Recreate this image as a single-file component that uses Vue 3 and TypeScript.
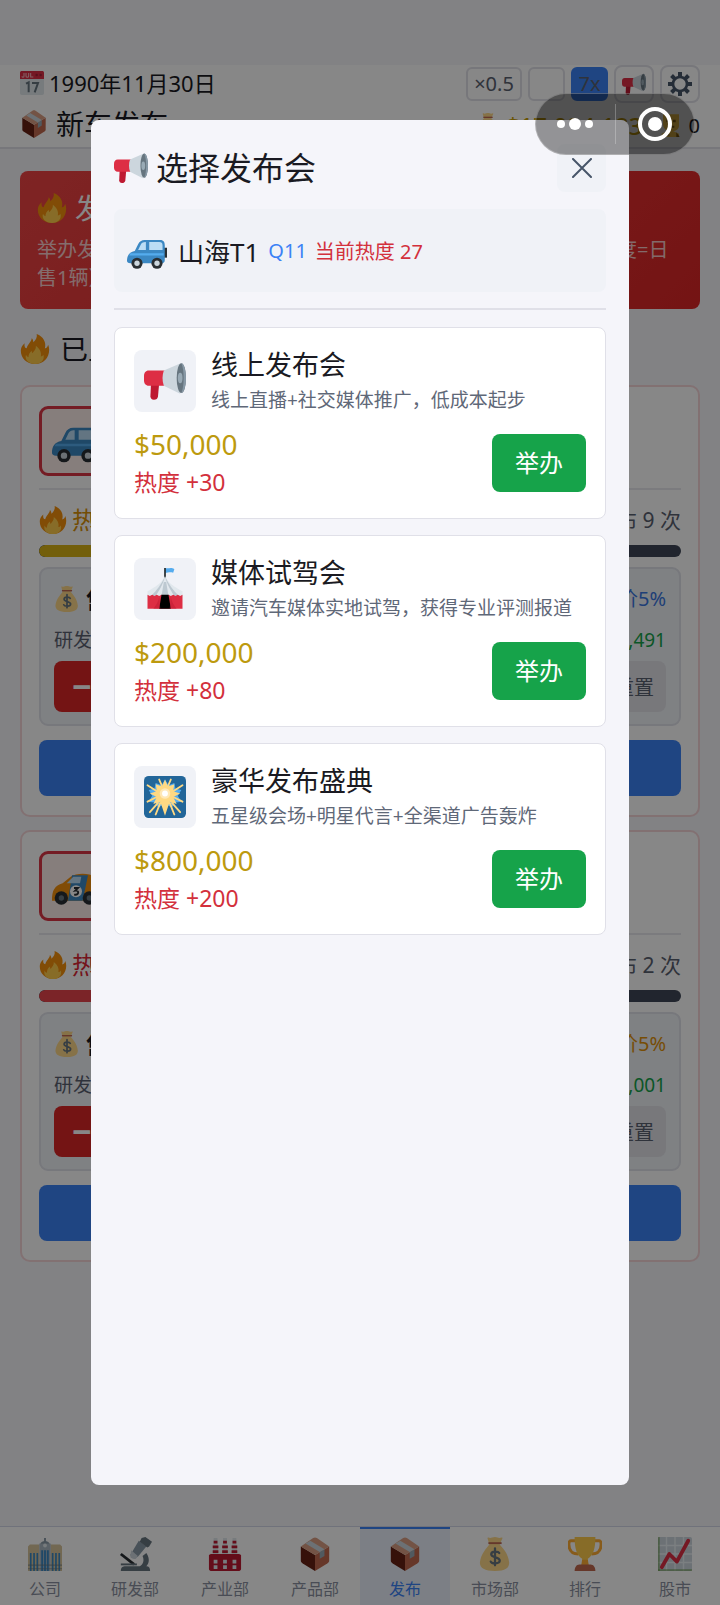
<script setup lang="ts">
import { ref } from 'vue'

interface LaunchEvent {
  icon: string
  name: string
  desc: string
  cost: number
  heat: number
}

interface CarCard {
  id: string
  icon: string
  tone: 'gold' | 'red'
  launches: number
  priceNote: string
  noteTone: 'blue' | 'amber'
  heat: number
  price: string
}

const events: LaunchEvent[] = [
  { icon: 'megaphone', name: '线上发布会', desc: '线上直播+社交媒体推广，低成本起步', cost: 50000, heat: 30 },
  { icon: 'tent', name: '媒体试驾会', desc: '邀请汽车媒体实地试驾，获得专业评测报道', cost: 200000, heat: 80 },
  { icon: 'sparkler', name: '豪华发布盛典', desc: '五星级会场+明星代言+全渠道广告轰炸', cost: 800000, heat: 200 },
]

const cars: CarCard[] = [
  { id: 'a', icon: 'suv', tone: 'gold', launches: 9, priceNote: '溢价5%', noteTone: 'blue', heat: 27, price: '$15,491' },
  { id: 'b', icon: 'racer', tone: 'red', launches: 2, priceNote: '降价5%', noteTone: 'amber', heat: 60, price: '$18,001' },
]

const tabs = [
  { icon: 'building', label: '公司' },
  { icon: 'microscope', label: '研发部' },
  { icon: 'factory', label: '产业部' },
  { icon: 'box', label: '产品部' },
  { icon: 'box', label: '发布' },
  { icon: 'bag', label: '市场部' },
  { icon: 'trophy', label: '排行' },
  { icon: 'chart', label: '股市' },
]

const activeTab = ref(4)
const modalOpen = ref(true)
const money = (n: number): string => '$' + n.toLocaleString('en-US')
</script>

<template>
  <svg class="sprite" aria-hidden="true">
    <symbol id="megaphone" viewBox="0 0 36 36">
      <path fill="#be1931" d="M6 20h7l-1 11c-.2 2-1.500 3-3.500 3S5.500 32.500 5.500 31z" />
      <path fill="#dd2e44" d="M4 9h15v13H4c-2.500 0-4-2-4-4.500v-4C0 11 1.500 9 4 9z" />
      <path fill="#ccd6dd" d="M17 9l14-6v26l-14-7c-1.500-4-1.500-9 0-13z" />
      <ellipse cx="32" cy="15.500" rx="4" ry="12.800" fill="#66757f" />
      <path fill="#8899a6" d="M32 2.700c2.200 0 4 5.700 4 12.800s-1.800 12.800-4 12.800c1.500-3 2-8 2-12.800s-.5-9.800-2-12.800z" />
      <ellipse cx="31" cy="15.500" rx="2" ry="4.500" fill="#99aab5" />
    </symbol>
    <symbol id="suv" viewBox="0 0 36 36">
      <path fill="#292f33" d="M33 15h3v9h-3z" />
      <path fill="#3b88c3" d="M0 27c0-5 2-8 7-9l3-6c1-2.500 3-4 6-4h14c3 0 4 2 4 5v13c0 2-1 3-3 3H3c-2 0-3-1-3-2z" />
      <path fill="#bbddf5" d="M10 17l2-4c1-2 2-3 5-3v7zM20 10h9c2 0 3 1 3 3v4H20z" />
      <path fill="#55acee" d="M3 20h30v2H2z" />
      <circle cx="9" cy="29" r="5" fill="#292f33" /><circle cx="27" cy="29" r="5" fill="#292f33" />
      <circle cx="9" cy="29" r="2.400" fill="#ccd6dd" /><circle cx="27" cy="29" r="2.400" fill="#ccd6dd" />
    </symbol>
    <symbol id="racer" viewBox="0 0 36 36">
      <path fill="#f4900c" d="M0 29c0-8 2-11 8-13l6-5c4-3 14-3 18 0h4v18z" />
      <path fill="#3b88c3" d="M15 10h12l-4 19H12z" />
      <path fill="#bbddf5" d="M11 16l5-5h6l-1 5z" />
      <circle cx="18" cy="22" r="4.500" fill="#fff" />
      <path fill="none" stroke="#292f33" stroke-width="1.400" d="M16.500 19.500h3l-2 2c3-.5 3 3.500-.9 3" />
      <circle cx="7" cy="27" r="5" fill="#292f33" /><circle cx="28" cy="27" r="5" fill="#292f33" />
      <circle cx="7" cy="27" r="2" fill="#66757f" /><circle cx="28" cy="27" r="2" fill="#66757f" />
    </symbol>
    <symbol id="fire" viewBox="0 0 36 36">
      <path fill="#f4900c" d="M35 19c0-2-.4-4-1.200-6-.8 3-2 4-4 4.500C32 10 28 3 20 0c1 4-1 7-4 10 0-2-.5-4-2-5 0 4-5 7-6 12C6 17 5 15 5.500 11 2 14 1 17 1 20c0 9 7 16 17 16s17-7 17-17z" />
      <path fill="#ffcc4d" d="M28 25c-.5 1-1.500 2-3 2 1-5-1-9-6-13 .5 4-2 6-4 9-.8-1-1-2-.8-3-3 2-4 5-4 8-1.500-.5-2.500-1.500-3-3-2 6 3 11 11 11 7 0 12-5 9.800-11z" />
    </symbol>
    <symbol id="box" viewBox="0 0 36 36">
      <path fill="#662113" d="M3 10l15 9v17L5 28c-1.500-1-2-1.500-2-3z" />
      <path fill="#c1694f" d="M33 10l-15 9v17l13-8c1.500-1 2-1.500 2-3z" />
      <path fill="#d99e82" d="M3 10L16 1c1.500-.8 2.500-.8 4 0l13 9-15 9z" />
      <path fill="#99aab5" d="M23 16l5-3v7l-5 3z" />
      <path fill="#ccd6dd" d="M8 7l5-3 15 9-5 3z" />
    </symbol>
    <symbol id="calendar" viewBox="0 0 36 36">
      <path fill="#e1e8ed" d="M0 8h36v25c0 2-1 3-3 3H3c-2 0-3-1-3-3z" />
      <path fill="#dd2e44" d="M0 3c0-2 1-3 3-3h30c2 0 3 1 3 3v9H0z" />
      <path fill="none" stroke="#f5b8c0" stroke-width="1.600" d="M6 3v5c0 2-3 2-3 0M9 3v5c0 2 4 2 4 0V3M16 3v6h4" />
      <circle cx="25" cy="6" r="1.800" fill="#a32035" /><circle cx="31" cy="6" r="1.800" fill="#a32035" />
      <path fill="none" stroke="#66757f" stroke-width="3" d="M9 19l4-2v15M18 18h9l-5 14" />
    </symbol>
    <symbol id="bag" viewBox="0 0 36 36">
      <path fill="#fdd888" d="M23 8c3 4 9 9 10 19 0 6-4 9-15 9S2 33 2 27c1-9 7-15 10-19L10 1c1-1 2 0 3 0s3-1 5-1 3 1 5 1 2-1 3 0z" />
      <path fill="#bf6952" d="M11 5.500h14v2H11z" />
      <path fill="none" stroke="#67757f" stroke-width="2.400" stroke-linecap="round" d="M22.500 17c-1-2-8.500-2.500-8.500 1.300 0 4 9 2.500 9 6.700 0 4-8.500 3.500-9.500 1M18 12v18" />
    </symbol>
    <symbol id="tent" viewBox="0 0 36 36">
      <path fill="#55acee" d="M18 0c3 1 5-1 8 1l-1 3c-3-1-4 0-7 0z" />
      <path stroke="#292f33" stroke-width="1.500" d="M18 0v9" />
      <path fill="#e1e8ed" d="M18 7c3 6 8 9 15 13v5H3v-5c7-4 12-7 15-13z" />
      <path fill="#99aab5" d="M18 7c-2 8-5 12-8 17H6c5-5 9-10 12-17zM18 7c2 8 5 12 8 17h4c-5-5-9-10-12-17zM17 12l-2 12h6l-2-12z" opacity=".5" />
      <path fill="#dd2e44" d="M3 23l2 1 2-1 2 1 2-1 2 1 2-1 3 1 3-1 2 1 2-1 2 1 2-1 2 1 2-1v12H3z" />
      <path fill="#000" d="M15 23h6l2 12H13z" />
      <path fill="#be1931" d="M8 35c2-3 4-5 5-10l1 10zM28 35c-2-3-4-5-5-10l-1 10z" opacity=".5" />
    </symbol>
    <symbol id="sparkler" viewBox="0 0 36 36">
      <rect width="36" height="36" rx="4" fill="#226699" />
      <path fill="#55acee" d="M18 3l3 5 5-2 1 5 5 1-3 5 3 5-6 1-2 4-6-3-6 3-2-4-6-1 3-5-3-5 5-1 1-5 5 2z" />
      <path stroke="#ffd983" stroke-width="1.600" stroke-linecap="round" d="M13 3l3 7M23 3l-3 7M3 8l8 5M33 8l-8 5M3 22l8-4M33 22l-8-4M5 31l7-8M31 31l-7-8M10 33l4-10M26 33l-4-10" />
      <path fill="#ffd983" d="M18 3l2.500 6L26 7l-1 6 6 2-6 3 3 6-6-2-4 12-4-12-6 2 3-6-6-3 6-2-1-6 5.500 2z" />
      <circle cx="18" cy="15" r="4.500" fill="#ffe8b6" /><circle cx="18" cy="15" r="2.500" fill="#fff" />
    </symbol>
    <symbol id="building" viewBox="0 0 36 36">
      <path fill="#8899a6" d="M13 8c0-5 10-5 10 0zM17 1h2v5h-2z" />
      <path fill="#d8c49c" d="M0 10l2-2h10v28H0zM24 8h10l2 2v26H24z" />
      <path fill="#aab8c2" d="M12 7h12v29H12z" />
      <path fill="#3b88c3" d="M2 17h1.800v19H2zM5.500 17h1.800v19H5.500zM9 17h1.800v19H9zM14 14h2v22h-2zM17 14h2v22h-2zM20 14h2v22h-2zM25.200 17H27v19h-1.800zM28.700 17h1.800v19h-1.800zM32.200 17H34v19h-1.800z" />
      <path fill="#66757f" d="M0 29h36v1.500H0zM0 33h36v1.200H0z" opacity=".6" /><circle cx="18" cy="9" r="2" fill="#e1e8ed" />
    </symbol>
    <symbol id="microscope" viewBox="0 0 36 36">
      <path fill="#66757f" d="M3 36c0-4 2-5 5-5h15c4-2 5-7 3-11l4-3c4 6 3 11 0 14 3 0 4 2 4 5z" />
      <path fill="#8899a6" d="M22 4l8 6-9 11c-2 2-7 0-8-2z" />
      <path fill="#ccd6dd" d="M14 14l7 6-2 3c-3 1-6-1-6-3z" />
      <path fill="#66757f" d="M25 1l4-1 7 5-3 5-2 1-8-6z" />
      <path stroke="#292f33" stroke-width="3" d="M3 18l14 11" /><path stroke="#66757f" stroke-width="2" d="M3 29h17" />
    </symbol>
    <symbol id="factory" viewBox="0 0 36 36">
      <path fill="#e1e8ed" d="M6 1h4l1 18H5zM16 1h4l1 18h-6zM26 1h4l1 18h-6z" />
      <path fill="#be1931" d="M6 4h4v3H6zM5 9h6v3H5zM5 14h6v3H5zM16 4h4v3h-4zM15 9h6v3h-6zM15 14h6v3h-6zM26 4h4v3h-4zM25 9h6v3h-6zM25 14h6v3h-6zM1 19l2-1h30l2 1v15c0 1-1 2-2 2H3c-1 0-2-1-2-2z" />
      <path fill="#e1e8ed" d="M6 24h4v4H6zM16 24h4v4h-4zM26 24h4v4h-4zM6 30h4v4H6zM16 30h4v4h-4zM26 30h4v4h-4z" />
    </symbol>
    <symbol id="trophy" viewBox="0 0 36 36">
      <path fill="none" stroke="#ffac33" stroke-width="3" d="M9 4H3c-2 0-2 2-2 4 0 6 3 10 10 10M27 4h6c2 0 2 2 2 4 0 6-3 10-10 10" />
      <path fill="#ffcc4d" d="M7 0h22c0 12-2 19-8 23v6h-6v-6C9 19 7 12 7 0z" />
      <path fill="#ffac33" d="M15 24h6l1 6h-8z" /><path fill="#c1694f" d="M12 29h12c3 0 5 3 5 7H7c0-4 2-7 5-7z" />
    </symbol>
    <symbol id="chart" viewBox="0 0 36 36">
      <rect width="36" height="36" rx="2" fill="#ccd6dd" />
      <path fill="none" stroke="#e9f0f3" stroke-width="1.500" d="M9 0v36M18 0v36M27 0v36M0 9h36M0 18h36M0 27h36" />
      <path stroke="#5c913b" stroke-width="1" d="M1 0v36M0 35h36" />
      <path fill="none" stroke="#dd2e44" stroke-width="4" stroke-linecap="round" stroke-linejoin="round" d="M4 32l8-14 8 8L32 4" />
    </symbol>
    <symbol id="gear" viewBox="0 0 36 36">
      <circle cx="18" cy="18" r="10.500" fill="none" stroke="#475569" stroke-width="4" />
      <path stroke="#475569" stroke-width="6" d="M18 0v7M18 29v7M0 18h7M29 18h7M5.300 5.300l5 5M25.700 25.700l5 5M5.300 30.700l5-5M25.700 10.300l5-5" />
    </symbol>
    <symbol id="staff" viewBox="0 0 36 36">
      <path fill="#ffcc4d" d="M6 2h24v17c0 5-5 8-9 8l9 4v5H4v-5l9-4c-4-2-7-5-7-10z" />
      <path fill="#8a6410" d="M11 10h4v4h-4zM21 10h4v4h-4zM13 19h10v3H13zM8 30l9 3-9 3zM26 29l5 7h-5z" />
    </symbol>
  </svg>

  <div class="page">
    <header class="top">
      <div class="bar">
        <span class="date"><svg class="i24"><use href="#calendar" /></svg>1990年11月30日</span>
        <span class="tools">
          <button class="speed wide">×0.5</button>
          <button class="speed" aria-label="暂停"></button>
          <button class="speed on">7x</button>
          <button class="tool" aria-label="公告"><svg class="i24"><use href="#megaphone" /></svg></button>
          <button class="tool" aria-label="设置"><svg class="i24"><use href="#gear" /></svg></button>
        </span>
      </div>
      <div class="bar second">
        <h1 class="title"><svg class="i28"><use href="#box" /></svg>新车发布</h1>
        <span class="wallet">
          <svg class="i24"><use href="#bag" /></svg><b class="cash">$17,084,183</b>
          <svg class="i24"><use href="#staff" /></svg><span>0</span>
        </span>
      </div>
    </header>

    <main class="content">
      <section class="banner">
        <h2 class="banner-title"><svg class="i30"><use href="#fire" /></svg>发布会热度</h2>
        <p class="banner-text">举办发布会可以提升车型的热度，热度会随着时间衰减（每一点热度=日售1辆）</p>
      </section>

      <h2 class="section-title"><svg class="i30"><use href="#fire" /></svg>已上市车型</h2>

      <article v-for="car in cars" :key="car.id" class="car">
        <div class="car-head">
          <span class="car-icon"><svg class="i48"><use :href="'#' + car.icon" /></svg></span>
        </div>
        <div class="heat-row" :class="car.tone">
          <span class="heat-name"><svg class="i28"><use href="#fire" /></svg>热度</span>
          <span class="times">已发布 {{ car.launches }} 次</span>
        </div>
        <div class="track"><div class="fill" :class="car.tone" :style="{ width: car.heat + '%' }"></div></div>
        <div class="panel">
          <div class="line">
            <span class="sale"><svg class="i26"><use href="#bag" /></svg>售价</span>
            <span :class="car.noteTone">{{ car.priceNote }}</span>
          </div>
          <div class="line cost"><span>研发成本</span><span class="green">{{ car.price }}</span></div>
          <div class="price-tools">
            <button class="minus">−</button>
            <button class="reset">重置</button>
          </div>
        </div>
        <button class="primary">举办发布会</button>
      </article>
    </main>

    <nav class="tabs">
      <button v-for="(tab, i) in tabs" :key="tab.label" class="tab" :class="{ active: i === activeTab }" @click="activeTab = i">
        <svg class="i34"><use :href="'#' + tab.icon" /></svg>{{ tab.label }}
      </button>
    </nav>

    <div v-if="modalOpen" class="overlay">
      <section class="modal" role="dialog" aria-label="选择发布会">
        <div class="modal-head">
          <h2 class="modal-title"><svg class="i34"><use href="#megaphone" /></svg>选择发布会</h2>
          <button class="close" aria-label="关闭" @click="modalOpen = false">
            <svg viewBox="0 0 20 20" class="cross"><path d="M1 1l18 18M19 1L1 19" /></svg>
          </button>
        </div>
        <div class="current">
          <svg class="i40"><use href="#suv" /></svg>
          <span class="model">山海T1</span><span class="grade">Q11</span><span class="now">当前热度 27</span>
        </div>
        <hr class="rule" />
        <div class="list">
          <article v-for="ev in events" :key="ev.name" class="event">
            <div class="event-head">
              <span class="event-icon"><svg class="i42"><use :href="'#' + ev.icon" /></svg></span>
              <div>
                <h3 class="event-name">{{ ev.name }}</h3>
                <p class="event-desc">{{ ev.desc }}</p>
              </div>
            </div>
            <div class="event-foot">
              <div>
                <p class="price">{{ money(ev.cost) }}</p>
                <p class="gain">热度 +{{ ev.heat }}</p>
              </div>
              <button class="hold">举办</button>
            </div>
          </article>
        </div>
      </section>
    </div>

    <div class="capsule">
      <button class="cap" aria-label="更多">
        <svg class="dots" viewBox="0 0 36 14"><circle cx="4" cy="7" r="4" /><circle cx="18" cy="7" r="6" /><circle cx="32" cy="7" r="4" /></svg>
      </button>
      <button class="cap end" aria-label="关闭小程序">
        <svg class="i34" viewBox="0 0 34 34"><circle cx="17" cy="17" r="15" fill="none" stroke="#fff" stroke-width="4" /><circle cx="17" cy="17" r="7" fill="#fff" /></svg>
      </button>
    </div>
  </div>
</template>

<style>
body {
  background: #f5f5fa;
}
</style>

<style scoped>
.sprite { position: absolute; width: 0; height: 0; }
.page {
  display: flex;
  flex-direction: column;
  box-sizing: border-box;
  min-height: 100vh;
  padding-top: 65px;
  background: #f5f5fa;
  color: #1a1a22;
  font-family: "Noto Sans", "Noto Sans CJK SC", sans-serif;
  font-size: 20px;
}
h1, h2, h3, p { margin: 0; font-weight: 400; }
button { padding: 0; border: 0; font: inherit; color: inherit; cursor: pointer; }
svg { flex: none; }
.i24 { width: 24px; height: 24px; }
.i26 { width: 26px; height: 26px; }
.i28 { width: 28px; height: 28px; }
.i30 { width: 30px; height: 30px; }
.i34 { width: 34px; height: 34px; }
.i40 { width: 40px; height: 40px; }
.i42 { width: 42px; height: 42px; }
.i48 { width: 48px; height: 48px; }

.top { padding: 0 20px; background: #fff; border-bottom: 2px solid #e0e0e8; }
.bar { display: flex; align-items: center; justify-content: space-between; height: 38px; }
.second { height: 44px; }
.date { display: flex; align-items: center; gap: 5px; padding-bottom: 2px; font-size: 22px; line-height: 30px; }
.tools { display: flex; align-items: center; gap: 6px; }
.speed {
  width: 37px; height: 34px; box-sizing: border-box;
  border: 2px solid #e0e0e8; border-radius: 6px; background: #fff; color: #5a6070; font-size: 20px; line-height: 28px;
}
.speed.wide { width: 56px; }
.speed.on { background: #3b82f6; border-color: #3b82f6; }
.tool {
  display: flex; align-items: center; justify-content: center;
  width: 40px; height: 38px; box-sizing: border-box;
  border: 2px solid #e0e0e8; border-radius: 8px; background: #fff;
}
.title { display: flex; align-items: center; gap: 8px; padding-bottom: 2px; font-size: 28px; line-height: 40px; }
.wallet { display: flex; align-items: center; gap: 6px; font-size: 20px; }
.cash { margin-right: 10px; color: #c9a00c; font-size: 24px; font-weight: 500; }

.content { padding: 22px 20px 40px; }
.banner {
  padding: 17px; border-radius: 8px; color: #fff;
  background: linear-gradient(135deg, #ef4444, #dc2626);
}
.banner-title { display: flex; align-items: center; gap: 8px; margin-bottom: 8px; font-size: 28px; line-height: 40px; }
.banner-text { color: rgba(255, 255, 255, .75); font-size: 20px; line-height: 28px; }
.section-title { display: flex; align-items: center; gap: 10px; margin: 20px 0 16px; font-size: 28px; line-height: 40px; }
.car {
  margin-bottom: 13px; padding: 19px 17px; border: 2px solid #f5d5d8; border-radius: 10px; background: #fff;
}
.car-head { padding-bottom: 12px; border-bottom: 2px solid #e8e8ee; }
.car-icon {
  display: flex; align-items: center;
  box-sizing: border-box; width: 70px; height: 70px; padding-left: 10px;
  border: 3px solid #dc3545; border-radius: 9px; background: #fdeeea;
}
.heat-row { display: flex; align-items: center; justify-content: space-between; margin: 15px 0 10px; font-size: 24px; line-height: 30px; }
.heat-row.gold { color: #d9920b; }
.heat-row.red { color: #dc2636; }
.heat-name { display: flex; align-items: center; gap: 5px; }
.times { color: #5a6070; font-size: 21px; }
.track { height: 12px; margin-bottom: 10px; overflow: hidden; border-radius: 6px; background: #3f4757; }
.fill { height: 12px; border-radius: 6px; }
.fill.gold { background: #d9b316; }
.fill.red { background: #e8444c; }
.panel { padding: 15px 13px 12px; border: 2px solid #e0e2ea; border-radius: 9px; background: #f0f3f8; }
.line { display: flex; align-items: center; justify-content: space-between; font-size: 20px; line-height: 30px; }
.line.cost { margin: 11px 0 6px; color: #5a6070; font-size: 19px; }
.sale { display: flex; align-items: center; gap: 6px; font-size: 22px; font-weight: 700; }
.blue { color: #3b78e0; }
.amber { color: #e0920b; }
.green { color: #16a34a; }
.price-tools { display: flex; justify-content: space-between; }
.minus { width: 56px; height: 51px; border-radius: 8px; background: #dc2626; color: #fff; font-size: 34px; font-weight: 700; line-height: 51px; }
.reset { width: 64px; height: 51px; border-radius: 8px; background: #e2e3e9; color: #5a6070; font-size: 20px; }
.primary { display: block; width: 100%; height: 56px; margin-top: 14px; border-radius: 8px; background: #3b82f6; color: #fff; font-size: 24px; }

.tabs { display: flex; height: 78px; margin-top: auto; border-top: 1px solid #d4d8e8; background: #fff; }
.tab {
  display: flex; flex: 1; flex-direction: column; align-items: center; gap: 6px;
  padding-top: 8px; border-top: 2px solid transparent; background: none;
  color: #8a90a0; font-size: 16px; line-height: 24px; white-space: nowrap;
}
.tab.active { border-top-color: #3b82f6; background: #eaf0fb; color: #3b82f6; }

.overlay {
  position: fixed; inset: 0; display: flex; align-items: center; justify-content: center;
  padding: 0 91px; background: rgba(0, 0, 0, .47);
}
.modal {
  flex: 1; box-sizing: border-box; height: 85vh; padding: 24px 23px; overflow: auto;
  border-radius: 8px; background: #f5f5fa;
}
.modal-head { display: flex; align-items: center; justify-content: space-between; }
.modal-title { display: flex; align-items: center; gap: 8px; font-size: 32px; line-height: 48px; }
.close {
  display: flex; align-items: center; justify-content: center;
  width: 49px; height: 48px; border-radius: 8px; background: #f0f2f7;
}
.cross { width: 20px; height: 20px; fill: none; stroke: #475569; stroke-width: 2; stroke-linecap: round; }
.current {
  display: flex; align-items: center; height: 83px; margin-top: 17px; padding: 0 13px;
  border-radius: 8px; background: #f0f2f7;
}
.model { margin: 0 9px 0 11px; font-size: 26px; }
.grade { margin-right: 8px; color: #3b82f6; }
.now { color: #d3303c; }
.rule { height: 2px; margin: 16px 0 17px; border: 0; background: #e0e0e8; }
.list { display: flex; flex-direction: column; gap: 16px; }
.event { padding: 18px 19px 17px; border: 1px solid #e0e0e8; border-radius: 8px; background: #fff; }
.event-head { display: flex; align-items: center; gap: 15px; }
.event-icon {
  display: flex; align-items: center; justify-content: center;
  width: 62px; height: 62px; border-radius: 8px; background: #f0f2f7;
}
.event-name { font-size: 27px; line-height: 38px; }
.event-desc { color: #5f6878; font-size: 19px; line-height: 32px; white-space: nowrap; }
.event-foot { display: flex; align-items: center; justify-content: space-between; margin-top: 9px; }
.price { color: #bd9a0e; font-size: 28px; line-height: 38px; }
.gain { color: #d3303c; font-size: 23px; line-height: 38px; }
.hold { width: 94px; height: 58px; padding-bottom: 4px; border-radius: 8px; background: #16a34a; color: #fff; font-size: 24px; }

.capsule {
  position: fixed; top: 93px; right: 25px; display: flex; align-items: center;
  box-sizing: border-box; width: 160px; height: 62px;
  border: 1px solid rgba(255, 255, 255, .25); border-radius: 31px; background: rgba(0, 0, 0, .4);
}
.cap { display: flex; flex: 1; align-items: center; justify-content: center; height: 40px; background: none; }
.cap.end { border-left: 1px solid rgba(255, 255, 255, .25); }
.dots { width: 36px; height: 14px; fill: #fff; }
</style>
